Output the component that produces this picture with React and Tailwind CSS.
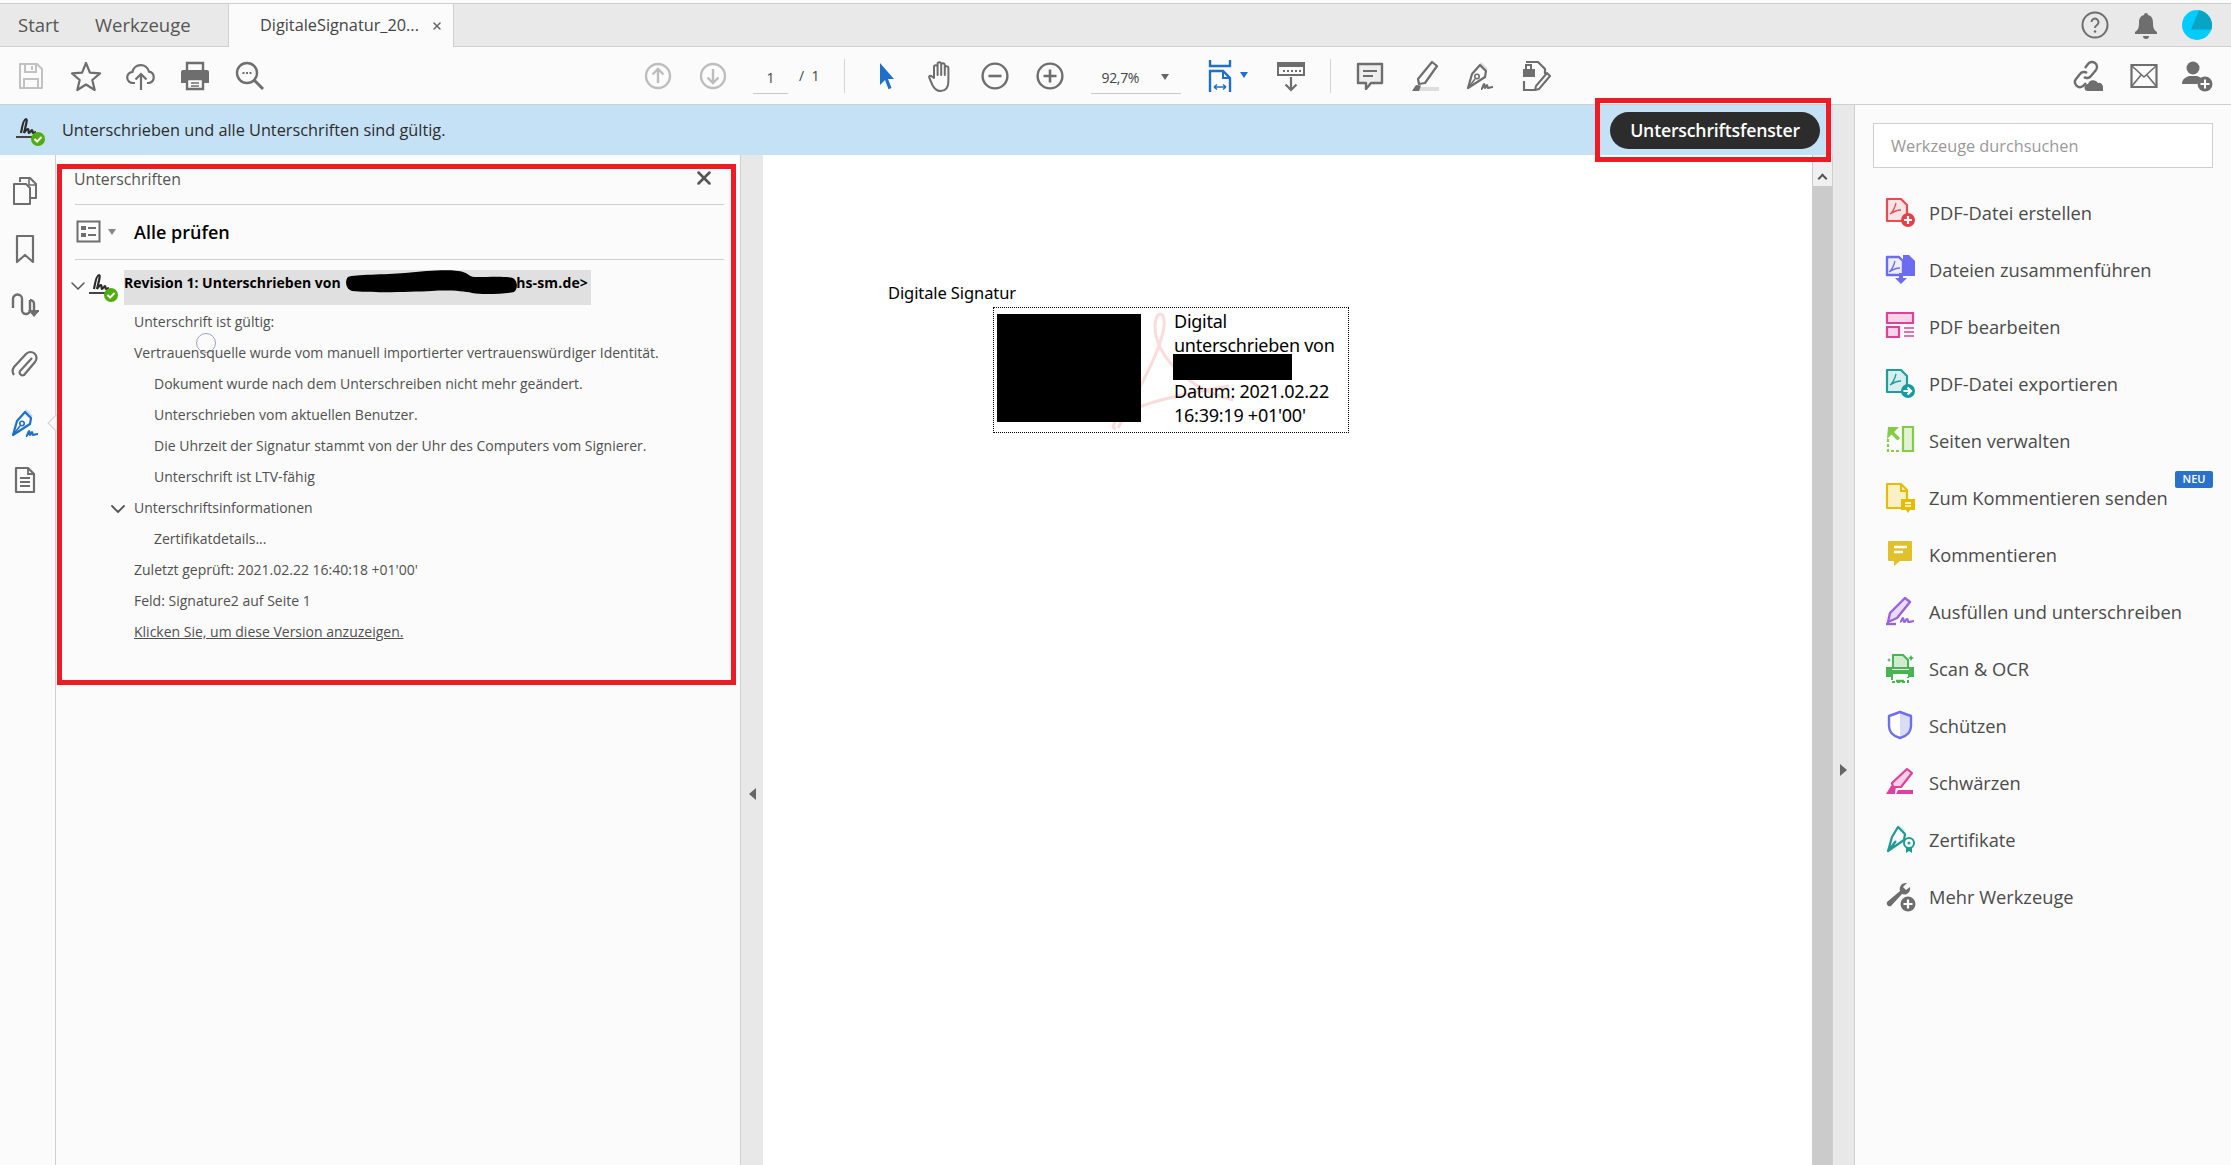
import { ChevronDown, X } from 'lucide-react';

const gray = '#6e6e6e';

function Ico({ w = 28, h = 28, vb = '0 0 28 28', children, className = '' }) {
  return (
    <svg width={w} height={h} viewBox={vb} fill="none" className={`shrink-0 ${className}`}>
      {children}
    </svg>
  );
}

function Slot({ w = 55, ml = 0, children }) {
  return (
    <div className="flex shrink-0 items-center justify-center" style={{ width: w, marginLeft: ml }}>
      {children}
    </div>
  );
}

function SignBadge() {
  return (
    <Ico w={32} h={32} vb="0 0 32 32">
      <path d="M7 19c1-6 3-14 5-14 2 0-1 9-2 14 2-3 3-4 4-4s0 4 1 4 2-3 3-3 0 3 1 3 2-1 3-1" stroke="#2c2c2c" strokeWidth="2.2" />
      <path d="M2 23h19" stroke="#444" strokeWidth="2" />
      <circle cx="24" cy="25" r="7" fill="#4fae0e" />
      <path d="M20.5 25l2.6 2.6 4.4-4.6" stroke="#fff" strokeWidth="2" />
    </Ico>
  );
}

/* toolbar icons */
const SaveIcon = () => (
  <Ico>
    <path d="M3 2h17l5 5v19H3z" stroke="#c2c2c2" strokeWidth="2" strokeLinejoin="round" />
    <path d="M8 2v8h11V2M7 26v-9h14v9" stroke="#c2c2c2" strokeWidth="2" />
    <path d="M15 4v4" stroke="#c2c2c2" strokeWidth="2" />
  </Ico>
);
const StarIcon = () => (
  <Ico w={32} h={32} vb="0 0 32 32">
    <path d="M16 3l3.9 9.6 10.1.8-7.7 6.6 2.4 10L16 24.5 7.3 30l2.4-10L2 13.4l10.1-.8z" stroke={gray} strokeWidth="2.2" strokeLinejoin="round" />
  </Ico>
);
const UploadIcon = () => (
  <Ico w={30} h={30} vb="0 0 30 30">
    <path d="M9 22H7a5.500 5.500 0 0 1-.6-11A8.500 8.500 0 0 1 23 10.600 5.800 5.800 0 0 1 23 22h-2" stroke={gray} strokeWidth="2.2" />
    <path d="M15 29V13M9.500 18.500L15 13l5.500 5.500" stroke={gray} strokeWidth="2.2" />
  </Ico>
);
const PrintIcon = () => (
  <Ico w={30} h={30} vb="0 0 30 30">
    <path d="M7 10V2h16v8" stroke={gray} strokeWidth="2.4" />
    <path d="M3 9h24a2 2 0 0 1 2 2v11h-5v-5H6v5H1V11a2 2 0 0 1 2-2z" fill={gray} />
    <path d="M7 18h16v10H7z" stroke={gray} strokeWidth="2.4" />
    <path d="M11 22h8M11 25h8" stroke={gray} strokeWidth="1.600" />
  </Ico>
);
const FindIcon = () => (
  <Ico w={30} h={30} vb="0 0 30 30">
    <circle cx="12" cy="12" r="10" stroke={gray} strokeWidth="2.4" />
    <path d="M19 19l9 9" stroke={gray} strokeWidth="3" />
    <path d="M7.500 12h2M11 12h2M14.500 12h2" stroke={gray} strokeWidth="2" />
  </Ico>
);
const CircleArrow = ({ down }) => (
  <Ico>
    <circle cx="14" cy="14" r="12" stroke="#bdbdbd" strokeWidth="2.4" />
    <path d={down ? 'M14 7v14M8.500 15.500L14 21l5.500-5.500' : 'M14 21V7M8.500 12.500L14 7l5.500 5.500'} stroke="#bdbdbd" strokeWidth="2.4" />
  </Ico>
);
const CursorIcon = () => (
  <Ico w={20} h={28} vb="0 0 20 28">
    <path d="M3 1l14 16h-6l3.500 9-3 1.200L8 18l-5 5z" fill="#1f70c8" />
  </Ico>
);
const HandIcon = () => (
  <Ico w={30} h={32} vb="0 0 30 32">
    <path d="M8 18V7a1.800 1.800 0 0 1 3.600 0v8-11a1.800 1.800 0 0 1 3.600 0v11-10a1.800 1.800 0 0 1 3.600 0v10-7a1.800 1.800 0 0 1 3.600 0v13c0 7-3 10-8 10-4 0-6-2-8-6l-3-7c-1-2 1-3 2.500-1.500z" stroke={gray} strokeWidth="2" strokeLinejoin="round" />
  </Ico>
);
const ZoomCircle = ({ plus }) => (
  <Ico>
    <circle cx="14" cy="14" r="12.400" stroke={gray} strokeWidth="2.400" />
    <path d={plus ? 'M7.500 14h13M14 7.500v13' : 'M7.500 14h13'} stroke={gray} strokeWidth="2.600" />
  </Ico>
);
const FitIcon = () => (
  <Ico w={24} h={32} vb="0 0 24 32">
    <path d="M2 0v6h20V0" stroke="#1f70c8" strokeWidth="2.400" />
    <path d="M2 32V11h13l7 7v14" stroke="#1f70c8" strokeWidth="2.400" />
    <path d="M15 11v7h7" stroke="#1f70c8" strokeWidth="2" />
    <path d="M6 27h12M6 27l3-2.500M6 27l3 2.500M18 27l-3-2.500M18 27l-3 2.500" stroke="#1f70c8" strokeWidth="1.500" />
  </Ico>
);
const RulerDown = () => (
  <Ico w={30} h={32} vb="0 0 30 32">
    <path d="M2 3h26v12H2z" stroke={gray} strokeWidth="2" />
    <path d="M2 3h26v4H2z" fill={gray} />
    <path d="M8 10v2M12 10v2M16 10v2M20 10v2M24 10v2" stroke={gray} strokeWidth="2" />
    <path d="M15 17v13M9.500 24.500L15 30l5.500-5.500" stroke={gray} strokeWidth="2.200" />
  </Ico>
);
const CommentIcon = ({ stroke = gray, fill = '#eee', w = 28 }) => (
  <Ico w={w} h={w} vb="0 0 28 28">
    <path d="M2 2h24v19H15l-5 6v-6H2z" fill={fill} stroke={stroke} strokeWidth="2.400" strokeLinejoin="round" />
    <path d="M7 9h14M7 14h10" stroke={stroke} strokeWidth="2" />
  </Ico>
);
const HighlightIcon = () => (
  <Ico w={30} h={32} vb="0 0 30 32">
    <path d="M22 2l5 4-12 17-6 1-1-5z" stroke={gray} strokeWidth="2.200" strokeLinejoin="round" />
    <path d="M5 27h24v4H2z" fill="#dedede" />
    <path d="M2 31l4-6 5 .5-2 5.500z" fill={gray} />
  </Ico>
);
const PenIcon = ({ c = gray, fill = '#ddd' }) => (
  <Ico w={30} h={30} vb="0 0 30 30">
    <path d="M16 1l7 7-4 2-5-5z" fill={fill} />
    <path d="M15 4l6 6-1 6-17 11 4-14z" stroke={c} strokeWidth="2.200" strokeLinejoin="round" />
    <path d="M3 27l7-9" stroke={c} strokeWidth="1.600" />
    <circle cx="12" cy="15.500" r="2.200" stroke={c} strokeWidth="1.600" />
    <path d="M16 28c2 0 2-5 3-5s0 4 1 4 1-3 2-3 0 3 1 3 2-1 5-1" stroke={c} strokeWidth="2" />
  </Ico>
);
const EditDocIcon = () => (
  <Ico w={32} h={32} vb="0 0 32 32">
    <path d="M7 2h12l7 7v5" stroke={gray} strokeWidth="2.200" />
    <path d="M4 9h12v8H4z" fill={gray} />
    <path d="M7 9V5h5v4" stroke={gray} strokeWidth="2" />
    <path d="M5 21v9h11" stroke={gray} strokeWidth="2.200" />
    <path d="M28 13l3 3-11 13-4 1 1-4z" stroke={gray} strokeWidth="2" strokeLinejoin="round" />
  </Ico>
);
const LinkCloud = () => (
  <Ico w={32} h={32} vb="0 0 32 32">
    <path d="M13 8l3-4a5 5 0 0 1 8 6l-5 6a5 5 0 0 1-7 1" stroke={gray} strokeWidth="2.400" />
    <path d="M15 13a5 5 0 0 0-7 1l-4 5a5 5 0 0 0 7 7l3-3" stroke={gray} strokeWidth="2.400" />
    <path d="M16 31a3.500 3.500 0 0 1 0-7 5.500 5.500 0 0 1 10-1 4 4 0 0 1 5 4v4z" fill={gray} />
  </Ico>
);
const MailIcon = () => (
  <Ico w={28} h={28} vb="0 0 28 28">
    <path d="M1.500 3h25v22h-25z" stroke={gray} strokeWidth="2.200" />
    <path d="M2 4l12 11L26 4M2 24l9-11M26 24l-9-11" stroke={gray} strokeWidth="1.600" />
  </Ico>
);
const UserPlus = () => (
  <Ico w={32} h={32} vb="0 0 32 32">
    <circle cx="12" cy="8" r="6.500" fill={gray} />
    <path d="M1 24c0-5 4-7 7-8h8c2 .5 4 1.500 5 3-3 1-4 3-4.500 5z" fill={gray} />
    <circle cx="24" cy="24" r="7.500" fill={gray} />
    <path d="M19.500 24h9M24 19.500v9" stroke="#fff" strokeWidth="2" />
  </Ico>
);

/* left rail icons */
const railIcons = [
  <Ico key="pages" w={26} h={30} vb="0 0 26 30">
    <path d="M8 6V2h10l6 6v14h-6" stroke={gray} strokeWidth="2" strokeLinejoin="round" />
    <path d="M2 8h12l4 4v16H2z" stroke={gray} strokeWidth="2" strokeLinejoin="round" />
    <path d="M17 2v7h7" stroke={gray} strokeWidth="1.600" />
  </Ico>,
  <Ico key="mark" w={22} h={30} vb="0 0 22 30">
    <path d="M3 2h16v26l-8-7-8 7z" stroke={gray} strokeWidth="2.200" strokeLinejoin="round" />
  </Ico>,
  <Ico key="layers" w={28} h={26} vb="0 0 28 26">
    <path d="M2 16V7a4.500 4.500 0 0 1 9 0v11a4 4 0 0 0 8 0V8" stroke={gray} strokeWidth="2.400" />
    <path d="M19 8a4 4 0 0 1 4 4v6" stroke={gray} strokeWidth="2.400" />
    <path d="M17 18h12l-6 7z" fill={gray} />
  </Ico>,
  <Ico key="clip" w={28} h={30} vb="0 0 28 30">
    <path d="M22 9L10 22a3 3 0 0 0 4 4l11-13a6 6 0 0 0-9-8L4 18a7 7 0 0 0 0 8" stroke={gray} strokeWidth="2.200" transform="translate(-1 -1)" />
  </Ico>,
  <PenIcon key="pen" c="#1f70c8" fill="#bcd9f2" />,
  <Ico key="doc" w={24} h={28} vb="0 0 24 28">
    <path d="M3 2h12l6 6v18H3z" stroke={gray} strokeWidth="2.200" strokeLinejoin="round" />
    <path d="M15 2v6h6M7 12h10M7 16h10M7 20h10" stroke={gray} strokeWidth="1.800" />
  </Ico>,
];

/* right tool list */
const PdfGlyph = ({ c, x = 5, y = 5 }) => (
  <path d={`M${x + 6} ${y}c-1 4-3 9-6 11 3-2 7-4 11-4`} stroke={c} strokeWidth="1.300" />
);
const tools = [
  {
    label: 'PDF-Datei erstellen',
    icon: (
      <>
        <path d="M2 2h14l6 6v16H2z" fill="#fbe4e5" stroke="#e84c52" strokeWidth="2.200" strokeLinejoin="round" />
        <PdfGlyph c="#e84c52" x={5} y={6} />
        <circle cx="23" cy="23" r="7" fill="#e5404a" />
        <path d="M19 23h8M23 19v8" stroke="#fff" strokeWidth="2.200" />
      </>
    ),
  },
  {
    label: 'Dateien zusammenführen',
    icon: (
      <>
        <path d="M18 1h6l6 6v15H18z" fill="#6c6cf0" />
        <path d="M2 3h12l4 4v14H2z" fill="#eceeff" stroke="#6c6cf0" strokeWidth="2.400" strokeLinejoin="round" />
        <PdfGlyph c="#6c6cf0" x={4} y={7} />
        <path d="M14 19h4v5h4l-6 6-6-6h4z" fill="#6c6cf0" />
      </>
    ),
  },
  {
    label: 'PDF bearbeiten',
    icon: (
      <>
        <path d="M2 2h26v10H2z" fill="#f6d5e8" stroke="#e0409b" strokeWidth="2.200" />
        <path d="M2 16h12v10H2z" fill="#f6d5e8" stroke="#e0409b" strokeWidth="2.200" />
        <path d="M19 17h10M19 21h10M19 25h10" stroke="#e0409b" strokeWidth="1.500" />
      </>
    ),
  },
  {
    label: 'PDF-Datei exportieren',
    icon: (
      <>
        <path d="M2 2h14l6 6v16H2z" fill="#d8eeee" stroke="#1f9c9c" strokeWidth="2.200" strokeLinejoin="round" />
        <PdfGlyph c="#1f9c9c" x={5} y={6} />
        <circle cx="23" cy="23" r="7" fill="#1a9a9f" />
        <path d="M18.500 23h7M22.500 19.500L26 23l-3.500 3.500" stroke="#fff" strokeWidth="2.200" />
      </>
    ),
  },
  {
    label: 'Seiten verwalten',
    icon: (
      <>
        <path d="M18 2h10v24H18z" fill="#e2f2d4" stroke="#84cc45" strokeWidth="2.200" />
        <path d="M3 14v12h12" stroke="#84cc45" strokeWidth="2.200" strokeDasharray="3 2" />
        <path d="M3 2h11L9 7l6 6-2.500 2.500-6-6L2 14z" fill="#84cc45" />
      </>
    ),
  },
  {
    label: 'Zum Kommentieren senden',
    badge: true,
    icon: (
      <>
        <path d="M2 2h14l6 6v18H2z" fill="#f9f0c4" stroke="#e5bd00" strokeWidth="2.200" strokeLinejoin="round" />
        <path d="M16 2v7h6" stroke="#e5bd00" strokeWidth="2" />
        <path d="M16 17h14v11h-5l-2 3-2-3h-5z" fill="#e5bd00" />
        <path d="M20 21h6M20 24h6" stroke="#fff" strokeWidth="1.500" />
      </>
    ),
  },
  {
    label: 'Kommentieren',
    icon: (
      <>
        <path d="M4 2h22a1 1 0 0 1 1 1v18a1 1 0 0 1-1 1H15l-6 5v-5H4a1 1 0 0 1-1-1V3a1 1 0 0 1 1-1z" fill="#e2c02a" />
        <path d="M9 8h13M9 13h9" stroke="#fff" strokeWidth="2.400" />
      </>
    ),
  },
  {
    label: 'Ausfüllen und unterschreiben',
    icon: (
      <>
        <path d="M20 2l5 4-13 16-9 4 2-9z" fill="#eadcf8" stroke="#9b62dc" strokeWidth="2.400" strokeLinejoin="round" />
        <path d="M1 28h10" stroke="#9b62dc" strokeWidth="2.400" />
        <path d="M15 26c2 0 2-4 3-4s0 4 1.500 4 1-3 2.500-3 0 3 2 3 3-1 5-1" stroke="#9b62dc" strokeWidth="2.200" />
      </>
    ),
  },
  {
    label: 'Scan & OCR',
    icon: (
      <>
        <path d="M8 2h10l5 5v8H8z" fill="#cfeccf" stroke="#46b552" strokeWidth="2" />
        <path d="M26 2l1 2 2 1-2 1-1 2-1-2-2-1 2-1zM4 5l.8 1.500L6 7l-1.200.5L4 9l-.8-1.500L2 7l1.200-.5z" fill="#46b552" />
        <path d="M1 14h6v3h17v-3h5v10h-6v-3H8v3H1z" fill="#46b552" />
        <path d="M7 24v5h16v-5" stroke="#46b552" strokeWidth="2" strokeDasharray="3 2" />
        <path d="M11 28h8" stroke="#46b552" strokeWidth="2.400" />
      </>
    ),
  },
  {
    label: 'Schützen',
    icon: (
      <>
        <path d="M15 2v26c-7-2-11-6-11-12V6z" fill="#fff" />
        <path d="M15 2l11 4v10c0 6-4 10-11 12z" fill="#d9dcfb" />
        <path d="M15 2l11 4v10c0 6-4 10-11 12-7-2-11-6-11-12V6z" stroke="#6c70ef" strokeWidth="2.400" strokeLinejoin="round" />
      </>
    ),
  },
  {
    label: 'Schwärzen',
    icon: (
      <>
        <path d="M22 2l5 4-11 14H8l-1-4z" fill="#f6d0e4" stroke="#e0409b" strokeWidth="2.200" strokeLinejoin="round" />
        <path d="M1 27l5-8h5l-1 8zM13 23h15v4H11z" fill="#e0409b" />
      </>
    ),
  },
  {
    label: 'Zertifikate',
    icon: (
      <>
        <path d="M14 1l6 5-2 4z" fill="#cdeae6" />
        <path d="M13 3l7 7-1 6-16 11 4-14zM3 27l8-10" stroke="#1c9b91" strokeWidth="2.200" strokeLinejoin="round" />
        <circle cx="24" cy="19" r="5" fill="#fff" stroke="#1c9b91" strokeWidth="2" />
        <circle cx="24" cy="19" r="1.500" fill="#1c9b91" />
        <path d="M21 23v6l3-2 3 2v-6" fill="#1c9b91" />
      </>
    ),
  },
  {
    label: 'Mehr Werkzeuge',
    icon: (
      <>
        <path d="M21 2a6 6 0 0 0-6 8L2 21a3 3 0 0 0 4 4l11-12a6 6 0 0 0 8-7l-4 3-3-3 4-4z" fill={gray} />
        <circle cx="23" cy="23" r="7.500" fill={gray} />
        <path d="M18.500 23h9M23 18.500v9" stroke="#fff" strokeWidth="2.200" />
      </>
    ),
  },
];

const rows = [
  { t: 'Unterschrift ist gültig:', indent: 133 },
  { t: 'Vertrauensquelle wurde vom manuell importierter vertrauenswürdiger Identität.', indent: 133 },
  { t: 'Dokument wurde nach dem Unterschreiben nicht mehr geändert.', indent: 153 },
  { t: 'Unterschrieben vom aktuellen Benutzer.', indent: 153 },
  { t: 'Die Uhrzeit der Signatur stammt von der Uhr des Computers vom Signierer.', indent: 153 },
  { t: 'Unterschrift ist LTV-fähig', indent: 153 },
  { t: 'Unterschriftsinformationen', indent: 133, chevron: true },
  { t: 'Zertifikatdetails...', indent: 153 },
  { t: "Zuletzt geprüft: 2021.02.22 16:40:18 +01'00'", indent: 133 },
  { t: 'Feld: Signature2 auf Seite 1', indent: 133 },
  { t: 'Klicken Sie, um diese Version anzuzeigen.', indent: 133, link: true },
];

export default function App() {
  return (
    <div className="relative flex h-screen w-full flex-col overflow-hidden bg-[#fbfbfb] font-['Open_Sans',sans-serif] text-[#4b4b4b]">
      {/* tab bar */}
      <div className="mt-[3px] flex h-[44px] shrink-0 items-stretch border-y border-[#cfcfcf] bg-[#e9e9e9]">
        <span className="ml-[18px] w-[77px] self-center text-[18.500px] text-[#555]">Start</span>
        <span className="w-[133px] self-center text-[18.500px] text-[#555]">Werkzeuge</span>
        <div className="-mb-px flex w-[226px] items-center border-x border-[#cfcfcf] bg-[#fbfbfb] pl-[31px]">
          <span className="text-[16.300px] text-[#444]">DigitaleSignatur_20...</span>
          <X size={12} strokeWidth={3} className="ml-[12px] text-[#666]" />
        </div>
        <div className="ml-auto flex items-center">
          <Slot w={50}>
            <Ico w={28} h={28} vb="0 0 28 28">
              <circle cx="14" cy="14" r="12.500" stroke={gray} strokeWidth="2" />
              <path d="M10.500 11a3.500 3.500 0 1 1 5.500 3c-1.500 1-2 1.500-2 3" stroke={gray} strokeWidth="2" />
              <circle cx="14" cy="20.500" r="1.300" fill={gray} />
            </Ico>
          </Slot>
          <Slot w={52}>
            <Ico w={24} h={28} vb="0 0 24 28">
              <path d="M12 2a2 2 0 0 1 2 2c4 1 5 4 5 8 0 5 1 7 4 9v2H1v-2c3-2 4-4 4-9 0-4 1-7 5-8a2 2 0 0 1 2-2z" fill={gray} />
              <path d="M9 25h6a3 3 0 0 1-6 0z" fill={gray} />
            </Ico>
          </Slot>
          <Slot w={50}>
            <Ico w={30} h={30} vb="0 0 30 30">
              <circle cx="15" cy="15" r="15" fill="#00ccff" />
              <path d="M17 .500a15 15 0 0 1 12.500 19H9z" fill="#08a4c4" />
            </Ico>
          </Slot>
          <div className="w-[9px]" />
        </div>
      </div>

      {/* toolbar */}
      <div className="flex h-[58px] shrink-0 items-center border-b border-[#cfcfcf] bg-[#fbfbfb] pl-[3px]">
        <Slot><SaveIcon /></Slot>
        <Slot><StarIcon /></Slot>
        <Slot><UploadIcon /></Slot>
        <Slot w={54}><PrintIcon /></Slot>
        <Slot w={56}><FindIcon /></Slot>
        <Slot w={55} ml={352}><CircleArrow /></Slot>
        <Slot w={55}><CircleArrow down /></Slot>
        <div className="ml-[13px] flex h-[33px] w-[35px] items-center justify-center self-end mb-[10px] border-b border-[#c8c8c8] text-[14px] text-[#444]">1</div>
        <span className="ml-[11px] mb-[1px] text-[14px] text-[#444]">/&nbsp;&nbsp;1</span>
        <div className="ml-[25px] h-[34px] w-px bg-[#d4d4d4]" />
        <Slot w={41} ml={21}><CursorIcon /></Slot>
        <Slot w={52} ml={8}><HandIcon /></Slot>
        <Slot w={55}><ZoomCircle /></Slot>
        <Slot w={55}><ZoomCircle plus /></Slot>
        <div className="ml-[14px] mb-[10px] flex h-[33px] w-[90px] items-center self-end border-b border-[#c8c8c8] pl-[10px] text-[14px] tracking-[-0.3px] text-[#444]">
          92,7%
          <span className="ml-[22px] border-x-[4px] border-t-[6px] border-x-transparent border-t-[#666]" />
        </div>
        <Slot w={28} ml={25}><FitIcon /></Slot>
        <span className="ml-[6px] mb-[2px] border-x-[4px] border-t-[6px] border-x-transparent border-t-[#1f70c8]" />
        <Slot w={44} ml={21}><RulerDown /></Slot>
        <div className="ml-[17px] h-[34px] w-px bg-[#d4d4d4]" />
        <Slot w={55} ml={11}><CommentIcon /></Slot>
        <Slot w={55}><HighlightIcon /></Slot>
        <Slot w={55}><PenIcon /></Slot>
        <Slot w={56}><EditDocIcon /></Slot>
        <div className="ml-auto flex items-center pr-[9px]">
          <Slot><LinkCloud /></Slot>
          <Slot w={57}><MailIcon /></Slot>
          <Slot w={50}><UserPlus /></Slot>
        </div>
      </div>

      <div className="flex min-h-0 flex-1">
        <div className="flex w-[1833px] shrink-0 flex-col">
          {/* status bar */}
          <div className="flex h-[50px] shrink-0 items-center bg-[#c5e1f6] pl-[14px]">
            <SignBadge />
            <span className="ml-[16px] text-[16.300px] text-[#2c2c2c]">Unterschrieben und alle Unterschriften sind gültig.</span>
            <button className="ml-auto mr-[13px] h-[37px] w-[210px] rounded-full bg-[#2c2c2c] text-[17.700px] font-semibold tracking-[-0.2px] text-white">
              Unterschriftsfenster
            </button>
          </div>

          <div className="flex min-h-0 flex-1">
            {/* left rail */}
            <div className="relative flex w-[56px] shrink-0 flex-col items-center border-r border-[#cfcfcf] pt-[21px] pr-[5px]">
              {railIcons.map((icon, i) => (
                <div key={i} className="flex h-[58px] items-start justify-center">{icon}</div>
              ))}
              <div className="absolute right-[-1px] top-[262px] h-[12px] w-[12px] origin-center translate-x-[6px] -rotate-45 border-l border-t border-[#cfcfcf] bg-[#fbfbfb]" />
            </div>

            {/* signatures panel */}
            <div className="relative w-[684px] shrink-0 pl-[19px] pr-[16px]">
              <div className="flex h-[50px] items-center justify-between border-b border-[#cfcfcf] pt-[1px]">
                <span className="-ml-px text-[15.800px] text-[#555]">Unterschriften</span>
                <X size={22} strokeWidth={2.8} className="mr-[9px] -mt-[4px] text-[#555]" />
              </div>
              <div className="flex h-[55px] items-center border-b border-[#cfcfcf]">
                <Ico w={26} h={24} vb="0 0 26 24" className="ml-[1px]">
                  <path d="M1.500 1.500h22v20h-22z" stroke={gray} strokeWidth="2" />
                  <path d="M5 6h5v4H5zM5 13h5v4H5z" fill={gray} />
                  <path d="M12 8h8M12 15h8" stroke={gray} strokeWidth="2" />
                </Ico>
                <span className="ml-[6px] border-x-[4px] border-t-[6px] border-x-transparent border-t-[#888]" />
                <span className="ml-[18px] text-[18px] font-semibold text-black">Alle prüfen</span>
              </div>
              <div className="relative mt-[10px] flex h-[35px] w-[467px] ml-[49px] items-start bg-[#e0e0e0] pt-[2px] text-[14px] font-bold text-black">
                <ChevronDown size={24} strokeWidth={1.500} className="absolute -left-[58px] top-[4px] text-[#555]" />
                <div className="absolute -left-[37px] top-[0px]"><SignBadge /></div>
                <span>Revision 1: Unterschrieben von</span>
                <span className="ml-auto pr-[3px] tracking-[0.15px]">hs-sm.de&gt;</span>
                <svg width="174" height="26" viewBox="0 0 174 26" className="absolute left-[221px] top-[-1px]">
                  <path d="M3 8C10 5 40 6 60 4 85 1 110 0 118 3c8 3 6 5 14 5 12 0 28-1 36 1 5 3 5 11 1 14-10 2-32 3-42 1-9-2-24-3-40-2-22 1-60 2-80 0C0 20 0 11 3 8z" fill="#000" />
                </svg>
              </div>
              <div className="absolute left-[140px] top-[178px] h-[20px] w-[20px] rounded-full border border-[#9aa7b8]" />
              <div className="mt-[1px]">
                {rows.map(r => (
                  <div
                    key={r.t}
                    className="relative flex h-[31px] items-center text-[14px] text-[#505050]"
                    style={{ paddingLeft: r.indent - 74 }}
                  >
                    {r.chevron && <ChevronDown size={24} strokeWidth={1.800} className="absolute left-[31px] top-[5px] text-[#555]" />}
                    <span className={r.link ? 'underline' : ''}>{r.t}</span>
                  </div>
                ))}
              </div>
            </div>

            {/* splitter */}
            <div className="flex w-[23px] shrink-0 items-center justify-center border-l border-[#cfcfcf] bg-[#e8e8e8]">
              <span className="mt-[268px] border-y-[6px] border-r-[7px] border-y-transparent border-r-[#666]" />
            </div>

            {/* document */}
            <div className="min-w-0 flex-1 bg-white pl-[125px] pt-[129px] font-['Noto_Sans',sans-serif] text-black">
              <div className="text-[16.500px] leading-[18px] tracking-[-0.1px]">Digitale Signatur</div>
              <div className="relative ml-[105px] mt-[5px] flex h-[126px] w-[356px] border border-dotted border-black">
                <svg width="140" height="122" viewBox="0 0 140 122" fill="none" className="absolute left-[112px] top-[0px]">
                  <path d="M12 120C25 95 55 45 58 18 60 2 49 2 49 18c0 28 30 62 78 74M10 120c-6 2-2-8 8-14 20-12 60-20 105-28" stroke="#fbdcdc" strokeWidth="3" />
                </svg>
                <div className="relative ml-[3px] mt-[6px] h-[108px] w-[144px] bg-black" />
                <div className="relative ml-[33px] mt-[1px] text-[18px] leading-[24px] tracking-[-0.25px]">
                  <div>Digital</div>
                  <div>unterschrieben von</div>
                  <div className="-ml-px -mt-[3px] -mb-[1px] h-[26px] w-[119px] bg-black" />
                  <div>Datum: 2021.02.22</div>
                  <div>16:39:19 +01'00'</div>
                </div>
              </div>
            </div>

            {/* scrollbar */}
            <div className="flex w-[21px] shrink-0 flex-col border-x border-[#cfcfcf] bg-[#f0f0f0]">
              <div className="flex h-[31px] shrink-0 items-center justify-center pt-[12px]">
                <span className="h-[7px] w-[7px] translate-y-[2px] rotate-45 border-l-2 border-t-2 border-[#555]" />
              </div>
              <div className="flex-1 bg-[#cbcbcb]" />
            </div>
          </div>
        </div>

        {/* right splitter */}
        <div className="flex w-[22px] shrink-0 items-center justify-center border-r border-[#cfcfcf] bg-[#e8e8e8]">
          <span className="mt-[269px] border-y-[6px] border-l-[7px] border-y-transparent border-l-[#666]" />
        </div>

        {/* tools panel */}
        <div className="min-w-0 flex-1 pl-[18px] pr-[18px] pt-[18px]">
          <input
            readOnly
            placeholder="Werkzeuge durchsuchen"
            className="h-[45px] w-full border border-[#cfcfcf] bg-white px-[17px] text-[16.300px] outline-none placeholder:text-[#999]"
          />
          <div className="mt-[16px]">
            {tools.map(t => (
              <div key={t.label} className="relative flex h-[57px] items-center pl-[12px]">
                <Ico w={32} h={32} vb="0 0 32 32">{t.icon}</Ico>
                <span className="ml-[12px] text-[18.300px] text-[#4b4b4b]">{t.label}</span>
                {t.badge && (
                  <span className="absolute right-0 top-[2px] flex h-[17px] w-[38px] items-center justify-center rounded-[2px] bg-[#2a72c9] text-[11px] font-semibold text-white">NEU</span>
                )}
              </div>
            ))}
          </div>
        </div>
      </div>

      {/* red annotation frames from the screenshot */}
      <div className="pointer-events-none absolute left-[57px] top-[164px] h-[521px] w-[679px] border-[5px] border-[#ed1c24]" />
      <div className="pointer-events-none absolute left-[1595px] top-[98px] h-[64px] w-[236px] border-[5px] border-[#ed1c24]" />
    </div>
  );
}
